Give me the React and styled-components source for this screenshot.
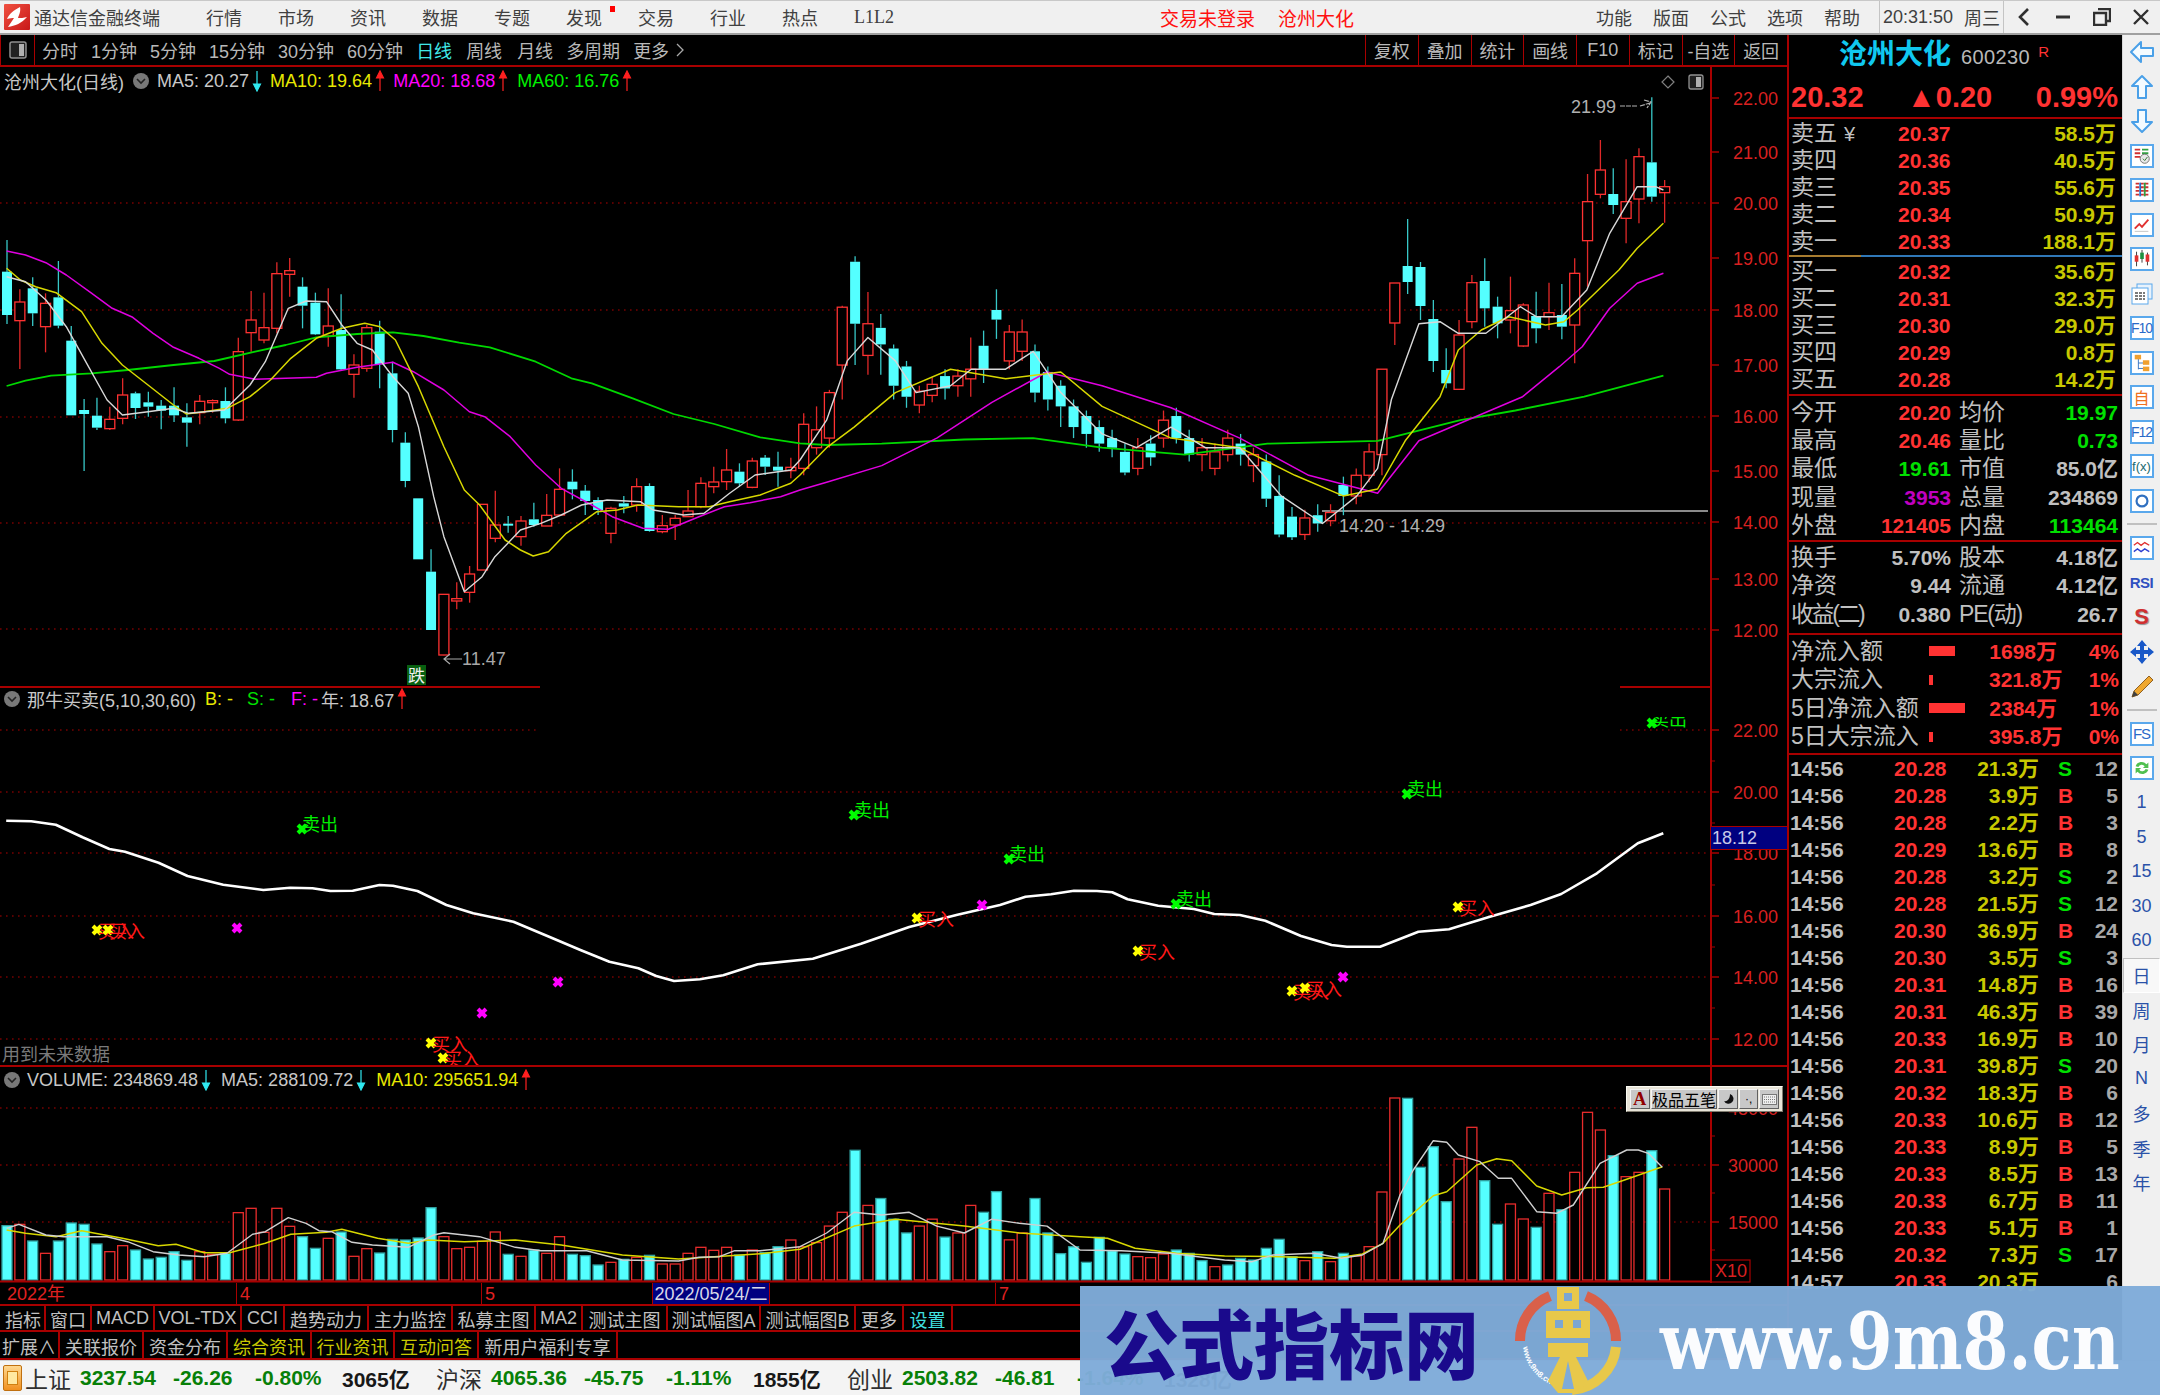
import React from 'react';
import styled, { createGlobalStyle } from 'styled-components';

const Global = createGlobalStyle`
  html, body { margin: 0; background: #000; overflow: hidden; }
  #root { width: 2160px; height: 1395px; }
`;

const SANS = `"Liberation Sans", "Noto Sans CJK SC", sans-serif`;
const DARK_RED = '#a80000';

// ---- coordinate helpers, the traces were read off crops at different scales
const fromLeft = ([x, y]) => [x / 1.96, 230 + y / 3];
const fromImg = ([x, y]) => [x * 1.3776, y * 1.3776];
const fromRight = ([x, y]) => [1440 + x / 2.18, y / 3];
const toPoints = (list) => list.map((p) => p.map((n) => n.toFixed(1)).join(',')).join(' ');
const candleX = (i) => 7 + 12.85 * i;

const MA20 = [
  ...[[13,63],[50,75],[90,98],[130,135],[180,190],[220,235],[260,262],[300,310],[340,352],[390,385],[430,415],[450,433],[500,448],[560,445],[620,442],[640,430],[700,412],[770,397],[810,425],[870,480],[920,545],[950,560],[1000,620],[1050,705],[1100,775],[1160,825],[1200,860],[1260,895],[1310,898],[1370,860],[1420,830],[1470,818],[1530,800],[1568,780]].map(fromLeft),
  ...[[600,350],[640,338],[680,318],[720,292],[760,270],[800,280],[850,296],[900,318],[950,345],[1000,358],[1030,320]].map(fromImg),
  ...[[180,1190],[260,1100],[310,1040],[370,925],[430,850],[487,820]].map(fromRight),
];
const MA60 = [
  ...[[13,468],[50,452],[100,437],[180,430],[250,420],[340,405],[420,393],[500,365],[560,345],[620,322],[700,312],[770,307],[830,318],[900,338],[960,352],[1050,395],[1120,445],[1160,460],[1240,505],[1320,552],[1400,582],[1490,622],[1568,640]].map(fromLeft),
  ...[[600,323],[640,322],[700,319],[750,318],[800,325],[860,330],[920,322],[1000,320],[1060,305],[1100,298],[1150,288]].map(fromImg),
  ...[[487,1127]].map(fromRight),
];
const MA10 = [
  ...[[13,115],[40,150],[70,170],[110,188],[160,245],[200,340],[240,405],[290,465],[340,525],[365,552],[400,545],[445,535],[490,500],[530,450],[570,385],[620,325],[670,295],[715,280],[745,290],[775,330],[820,470],[870,650],[910,780],[940,825],[990,930],[1020,960],[1045,978],[1075,965],[1110,910],[1170,845],[1210,840],[1250,825],[1330,830],[1390,830],[1430,815],[1490,795],[1550,760],[1568,735]].map(fromLeft),
  ...[[600,325],[620,310],[650,285],[690,268],[730,275],[770,270],[800,295],[850,318],[900,325],[940,345],[975,360],[1000,355],[1020,320]].map(fromImg),
  ...[[0,1190],[40,1050],[90,990],[150,950],[230,975],[270,965],[300,930],[390,810],[430,745],[487,670]].map(fromRight),
];
const MA5 = [
  ...[[13,140],[50,155],[90,210],[130,290],[170,400],[210,510],[240,555],[290,545],[340,535],[370,550],[440,540],[490,465],[520,395],[565,235],[600,213],[640,215],[670,285],[700,340],[730,360],[770,440],[800,490],[820,590],[850,800],[870,920],[910,1085],[945,1040],[970,980],[1020,900],[1060,880],[1100,855],[1140,825],[1190,810],[1255,815],[1280,840],[1340,855],[1380,850],[1430,790],[1480,735],[1550,720],[1568,690]].map(fromLeft),
  ...[[600,305],[615,262],[630,245],[650,262],[665,285],[690,280],[705,268],[730,268],[750,255],[770,285],[800,315],[825,325],[850,310],[875,325],[900,325],[930,360],[960,380],[985,360],[1000,340],[1010,290],[1030,235]].map(fromImg),
  ...[[0,965],[40,1000],[100,1000],[175,920],[210,950],[265,950],[320,870],[370,700],[430,560],[470,560],[487,570]].map(fromRight),
];

// hi, body top, body bottom, lo, colour
const CANDLES_A = [
  [30,125,255,282,'c'],[178,216,272,417,'r'],[142,175,250,288,'c'],[190,220,290,367,'r'],[93,202,287,295,'c'],[288,332,556,556,'c'],[507,540,552,723,'c'],[503,557,593,600,'c'],[530,568,596,600,'r'],[445,495,565,583,'r'],
  [485,490,534,567,'c'],[485,517,530,560,'c'],[510,527,542,598,'c'],[472,527,556,576,'c'],[520,562,578,650,'c'],[495,514,548,583,'r'],[508,512,515,548,'r'],[472,513,565,580,'c'],[323,365,570,573,'r'],[183,270,308,365,'r'],
  [188,293,330,340,'r'],[97,131,295,310,'r'],[84,122,133,200,'r'],[142,170,227,295,'c'],[188,218,313,315,'c'],[175,288,318,350,'r'],[193,300,418,420,'c'],[373,405,433,503,'r'],[285,293,415,425,'r'],[272,305,403,475,'c'],
  [395,430,600,637,'c'],[607,638,753,772,'c'],[805,805,988,988,'c'],[958,1025,1200,1200,'c'],[1093,1093,1275,1276,'r'],[1057,1106,1113,1138,'r'],[1008,1032,1087,1118,'r'],[823,823,1020,1020,'r'],[782,885,925,937,'r'],[858,881,885,908,'c'],
  [858,873,920,947,'r'],[818,868,885,890,'c'],[792,856,888,888,'r'],[715,778,855,858,'r'],[718,755,778,808,'c'],[765,782,813,855,'c'],[802,810,840,855,'c'],[830,835,910,940,'r'],[798,820,830,850,'c'],[745,770,825,845,'r'],
  [760,768,903,905,'c'],[855,887,905,910,'r'],[855,865,885,930,'r'],[780,843,860,860,'r'],[742,760,830,835,'r'],[710,756,770,790,'r'],[657,720,755,780,'r'],[700,725,760,770,'c'],[683,693,772,775,'r'],[675,683,710,735,'c'],
  [665,710,722,770,'c'],[683,712,722,745,'r'],
].map(([h, t, b, l, k]) => [230 + h / 3, 230 + t / 3, 230 + b / 3, 230 + l / 3, k]);

const CANDLES_B = [
  [300,308,340,345,'r'],[295,312,325,330,'r'],[283,285,318,325,'r'],[222,223,265,290,'r'],[186,190,235,265,'c'],[212,235,258,272,'r'],[228,238,250,272,'c'],[250,253,280,290,'c'],[262,266,288,296,'c'],[280,284,294,300,'r'],
  [274,279,287,292,'r'],[268,273,282,290,'c'],[268,273,280,288,'r'],[245,268,275,288,'r'],[240,251,268,278,'c'],[210,225,232,246,'c'],[236,241,262,268,'r'],[232,241,255,262,'r'],[250,255,285,292,'c'],[266,270,290,298,'c'],
  [276,280,295,310,'c'],[290,295,310,318,'c'],[298,302,315,325,'c'],[305,310,322,328,'c'],[312,318,325,332,'c'],[322,328,343,345,'c'],[318,325,340,345,'r'],[316,322,332,338,'c'],[298,305,318,325,'r'],[296,302,318,322,'c'],
  [312,318,330,335,'c'],[318,325,330,342,'r'],[322,328,340,345,'r'],[312,318,330,335,'r'],[315,322,330,338,'c'],[325,330,338,350,'r'],[330,335,362,368,'c'],[345,360,388,390,'c'],[368,375,390,392,'c'],[370,376,388,392,'r'],
  [366,374,380,386,'c'],[366,372,378,382,'r'],[346,352,360,374,'c'],[340,345,360,366,'r'],[322,328,345,350,'r'],
].map((c) => [c[0] * 1.3776, c[1] * 1.3776, c[2] * 1.3776, c[3] * 1.3776, c[4]]);

const CANDLES_107 = [[268 * 1.3776, 268 * 1.3776, 330 * 1.3776, 345 * 1.3776, 'r'], [207 * 1.3776, 283, 323, 345, 'r'], [219, 266, 282, 294, 'c'], [262, 267, 306, 320, 'c'], [300, 319, 361, 372, 'c']];

const CANDLES_C = [
  [1045,1110,1150,1165,'c'],[960,1005,1168,1170,'r'],[825,848,965,985,'r'],[775,843,925,980,'c'],[890,920,970,1015,'c'],[830,932,960,1000,'r'],[910,915,1038,1040,'r'],[875,948,985,1030,'c'],[848,938,950,990,'r'],[852,945,980,1018,'c'],
  [775,820,975,1090,'r'],[522,605,722,860,'r'],[420,510,583,595,'r'],[505,582,615,642,'c'],[478,605,655,730,'r'],[445,470,597,670,'r'],[292,487,590,605,'c'],[540,560,578,668,'r'],
].map(([h, t, b, l, k]) => [h / 3, t / 3, b / 3, l / 3, k]);

const CANDLES = [...CANDLES_A, ...CANDLES_B, ...CANDLES_107, ...CANDLES_C];

const VOL_LEFT = [
  [497,'c'],[493,'r'],[543,'c'],[580,'r'],[543,'c'],[489,'c'],[493,'c'],[552,'c'],[575,'r'],[557,'r'],[570,'c'],[597,'c'],[592,'c'],[575,'c'],[601,'c'],[575,'r'],[583,'r'],[580,'c'],[458,'r'],[445,'r'],
  [517,'r'],[445,'r'],[499,'r'],[530,'c'],[565,'c'],[535,'r'],[516,'c'],[589,'r'],[566,'r'],[579,'c'],[538,'c'],[540,'c'],[534,'c'],[443,'c'],[530,'r'],[566,'r'],[562,'r'],[544,'r'],[516,'r'],[583,'c'],
  [589,'r'],[570,'c'],[580,'r'],[530,'r'],[583,'c'],[587,'c'],[615,'c'],[607,'r'],[598,'c'],[592,'r'],[586,'c'],[612,'r'],[612,'r'],[580,'r'],[562,'r'],[571,'r'],[562,'r'],[585,'c'],[570,'r'],[578,'c'],
  [560,'c'],[540,'r'],
].map(([t, k]) => [1060 + t / 3, k]);
const VOL_MID_A = [[905,'r'],[902,'r'],[890,'r'],[880,'r'],[835,'c'],[875,'r'],[870,'c'],[885,'c'],[895,'c'],[890,'r'],[885,'r'],[898,'c'],[895,'r'],[875,'r'],[880,'c'],[865,'c'],[900,'r'],[895,'r'],[870,'c'],[895,'c'],[910,'c'],[905,'c']].map(([t, k]) => [t * 1.3776, k]);
const VOL_MID_B = [[97,'c'],[22,'c'],[62,'c'],[72,'c'],[80,'r'],[83,'r'],[72,'r'],[60,'c'],[70,'c'],[92,'c'],[110,'r'],[105,'c'],[85,'c'],[90,'c'],[55,'c'],[28,'c'],[80,'c'],[92,'r'],[65,'c'],[95,'r'],[70,'c'],[78,'r'],[50,'r']].map(([t, k]) => [1230 + t / 3, k]);
const VOL_RIGHT = [[1192,'r'],[1098,'r'],...[[115,'c'],[322,'c'],[260,'c'],[425,'c'],[297,'r'],[202,'r'],[362,'c'],[493,'c'],[432,'r'],[477,'r'],[502,'c'],[400,'r'],[449,'c'],[337,'r'],[157,'r'],[210,'r'],[287,'c'],[350,'r'],[337,'r'],[272,'c'],[387,'r']].map(([t, k]) => [1060 + t / 3, k])];
const VOLUMES = [...VOL_LEFT, ...VOL_MID_A, ...VOL_MID_B, ...VOL_RIGHT];

const volLeft = ([x, y]) => [x / 1.96, 1060 + y / 3];
const volRightA = ([x, y]) => [1080 + x / 1.452, 1230 + y / 3];
const volRightB = ([x, y]) => [1400 + x / 3, 1060 + y / 3];
const VOL_WHITE = [
  ...[[13,505],[37,493],[90,525],[125,530],[210,530],[250,545],[300,575],[350,585],[400,590],[445,580],[495,523],[520,515],[565,473],[600,490],[625,512],[650,515],[690,547],[730,555],[800,562],[850,525],[870,518],[940,530],[1010,562],[1060,572],[1150,572],[1220,600],[1330,603],[1370,592],[1410,590],[1440,572],[1490,572],[1568,560]].map(volLeft),
  ...[[600,895],[620,880],[640,882],[660,880],[680,890],[700,895],[720,885],[740,888],[760,890]].map(fromImg),
  ...[[0,60],[60,62],[130,70],[210,90],[250,95],[280,75],[340,70],[380,85],[410,75],[440,40]].map(volRightA),
  ...[[0,405],[40,330],[100,242],[140,247],[175,285],[240,305],[295,355],[335,355],[410,455],[470,460],[520,435],[600,310],[680,270],[715,270],[745,280],[787,322]].map(volRightB),
];
const VOL_YELLOW = [
  ...[[13,510],[50,520],[110,530],[160,512],[240,535],[310,557],[345,553],[400,578],[450,578],[520,550],[570,523],[640,517],[670,508],[740,535],[800,550],[840,540],[910,545],[1010,540],[1100,555],[1220,585],[1330,597],[1400,590],[1500,580],[1568,568]].map(volLeft),
  ...[[620,890],[650,885],[700,890],[740,895]].map(fromImg),
  ...[[0,20],[40,25],[80,55],[140,70],[210,78],[290,80],[370,85],[410,72],[440,40]].map(volRightA),
  ...[[0,495],[40,460],[100,407],[140,395],[230,315],[290,296],[335,302],[410,378],[485,405],[560,383],[610,382],[680,358],[787,320]].map(volRightB),
];

const YEAR_LINE = [
  ...[[14,422],[70,424],[125,434],[185,472],[245,507],[280,515],[355,548],[420,588],[500,614],[590,630],[650,623],[700,625],[740,633],[790,632],[850,615],[880,617],[935,633],[1000,675],[1060,700],[1150,725],[1230,770],[1300,810],[1365,845],[1430,865],[1470,888],[1510,903],[1568,898]].map(([x, y]) => [x / 2.24, 680 + y / 3]),
  ...[[525,708],[550,700],[590,696],[625,685],[660,673],[695,664]].map(fromImg),
  ...[[0,675],[50,650],[100,643],[145,632],[190,633],[220,637],[250,658],[310,677],[380,687],[420,702],[470,705],[520,722],[590,768],[650,795],[680,800],[745,800],[820,755],[880,748],[960,710],[1040,675],[1100,642],[1170,580],[1250,490],[1300,460]].map(([x, y]) => [1000 + x / 1.96, 680 + y / 3]),
];

const SELL_MARKS = [[302,829],[854,815],[1009,859],[1176,904],[1407,794]];
const BUY_MARKS = [[97,930],[108,930],[431,1043],[443,1058],[917,918],[1138,951],[1292,991],[1305,988],[1458,907]];
const PINK_MARKS = [[237,928],[482,1013],[558,982],[982,905],[1343,977]];

const PRICE_LABELS = [[22,98],[21,152],[20,203],[19,258],[18,310],[17,365],[16,416],[15,471],[14,522],[13,579],[12,630]];
const IND_LABELS = [[22,730],[20,792],[18,853],[16,916],[14,977],[12,1039]];

const TOP_MENU = ['行情', '市场', '资讯', '数据', '专题', '发现', '交易', '行业', '热点'];
const RIGHT_MENU = ['功能', '版面', '公式', '选项', '帮助'];
const PERIODS = [['分时'], ['1分钟'], ['5分钟'], ['15分钟'], ['30分钟'], ['60分钟'], ['日线'], ['周线', 1], ['月线', 2], ['多周期'], ['更多']];
const TOOLS = ['复权', '叠加', '统计', '画线', 'F10', '标记', '-自选', '返回'];
const SELL_BOOK = [['卖五', '20.37', '58.5万'], ['卖四', '20.36', '40.5万'], ['卖三', '20.35', '55.6万'], ['卖二', '20.34', '50.9万'], ['卖一', '20.33', '188.1万']];
const BUY_BOOK = [['买一', '20.32', '35.6万'], ['买二', '20.31', '32.3万'], ['买三', '20.30', '29.0万'], ['买四', '20.29', '0.8万'], ['买五', '20.28', '14.2万']];
const STATS_A = [
  ['今开', '20.20', '#ff3232', '均价', '19.97', '#00e000'],
  ['最高', '20.46', '#ff3232', '量比', '0.73', '#00e000'],
  ['最低', '19.61', '#00e000', '市值', '85.0亿', '#c0c0c0'],
  ['现量', '3953', '#c000c0', '总量', '234869', '#c0c0c0'],
  ['外盘', '121405', '#ff3232', '内盘', '113464', '#00e000'],
];
const STATS_B = [
  ['换手', '5.70%', '#c0c0c0', '股本', '4.18亿', '#c0c0c0'],
  ['净资', '9.44', '#c0c0c0', '流通', '4.12亿', '#c0c0c0'],
  ['收益(二)', '0.380', '#c0c0c0', 'PE(动)', '26.7', '#c0c0c0'],
];
const FLOWS = [['净流入额', 26, '1698万', '4%'], ['大宗流入', 4, '321.8万', '1%'], ['5日净流入额', 36, '2384万', '1%'], ['5日大宗流入', 4, '395.8万', '0%']];
const TICKS = [
  ['14:56','20.28','21.3万','S','12'],['14:56','20.28','3.9万','B','5'],['14:56','20.28','2.2万','B','3'],['14:56','20.29','13.6万','B','8'],['14:56','20.28','3.2万','S','2'],
  ['14:56','20.28','21.5万','S','12'],['14:56','20.30','36.9万','B','24'],['14:56','20.30','3.5万','S','3'],['14:56','20.31','14.8万','B','16'],['14:56','20.31','46.3万','B','39'],
  ['14:56','20.33','16.9万','B','10'],['14:56','20.31','39.8万','S','20'],['14:56','20.32','18.3万','B','6'],['14:56','20.33','10.6万','B','12'],['14:56','20.33','8.9万','B','5'],
  ['14:56','20.33','8.5万','B','13'],['14:56','20.33','6.7万','B','11'],['14:56','20.33','5.1万','B','1'],['14:56','20.32','7.3万','S','17'],['14:57','20.33','20.3万','','6'],
];
const BTN_ROW_A = [['指标',44],['窗口',46],['MACD',63],['VOL-TDX',87],['CCI',43],['趋势动力',84],['主力监控',84],['私募主图',83],['MA2',47],['测试主图',85],['测试幅图A',93],['测试幅图B',95],['更多',48],['设置',49,'#40e0e0']];
const BTN_ROW_B = [['扩展∧',60],['关联报价',84],['资金分布',84],['综合资讯',84,'#c8c800'],['行业资讯',83,'#c8c800'],['互动问答',84,'#c8c800'],['新用户福利专享',139]];
const QUOTES = [
  ['上证','3237.54','-26.26','-0.80%','3065亿'],
  ['沪深','4065.36','-45.75','-1.11%','1855亿'],
  ['创业','2503.82','-46.81','-1.64%','1328亿'],
];

// ---- layout
const Page = styled.div`
  width: 2160px;
  height: 1395px;
  position: relative;
  overflow: hidden;
  display: flex;
  flex-direction: column;
  font-family: ${SANS};
`;

const TitleBar = styled.div`
  height: 35px;
  box-sizing: border-box;
  flex: none;
  display: flex;
  align-items: center;
  background: #f0f0f0;
  border-top: 1px solid #c8c8c8;
  border-bottom: 2px solid #a0a0a0;
  color: #404040;
  font-size: 18px;
`;

const AppName = styled.div`
  margin-left: 4px;
  width: 172px;
`;

const MenuItem = styled.div`
  position: relative;
  width: ${(p) => p.$w || 72}px;
  font-family: ${(p) => (p.$serif ? '"Liberation Serif", serif' : 'inherit')};
`;

const RedDot = styled.span`
  position: absolute;
  left: 44px;
  top: 2px;
  width: 5px;
  height: 6px;
  background: #ff0000;
`;

const AlertText = styled.div`
  color: #ff1010;
  font-size: 19px;
  margin-left: ${(p) => p.$ml}px;
`;

const RightMenu = styled.div`
  margin-left: auto;
  display: flex;
  align-items: center;
  height: 100%;
`;

const Clock = styled.div`
  height: 100%;
  width: 125px;
  box-sizing: border-box;
  margin-left: -2px;
  padding-left: 3px;
  display: flex;
  align-items: center;
  justify-content: space-between;
  padding-right: 3px;
  white-space: nowrap;
  border-left: 1px solid #c4c4c4;
  border-right: 1px solid #c4c4c4;
  font-size: 18px;
`;

const WinButton = styled.div`
  width: 39px;
  display: flex;
  justify-content: center;
  align-items: center;
  color: #303030;
`;

const Body = styled.div`
  flex: none;
  height: 1325px;
  display: flex;
  background: #000;
`;

const LeftCol = styled.div`
  width: 1787px;
  flex: none;
  display: flex;
  flex-direction: column;
`;

const Toolbar = styled.div`
  height: 32px;
  box-sizing: border-box;
  flex: none;
  display: flex;
  align-items: center;
  border-bottom: 2px solid ${DARK_RED};
  color: #b8b8b8;
  font-size: 18px;
`;

const PanelToggle = styled.div`
  width: 35px;
  height: 100%;
  box-sizing: border-box;
  display: flex;
  align-items: center;
  justify-content: center;
  border-left: 1px solid ${DARK_RED};
  border-right: 1px solid ${DARK_RED};
`;

const Periods = styled.div`
  display: flex;
  align-items: center;
  gap: 13px;
  padding-left: 7px;
`;

const Period = styled.span`
  margin-left: ${(p) => p.$ml || 0}px;
  color: ${(p) => (p.$active ? '#40e8e8' : 'inherit')};
`;

const Tools = styled.div`
  margin-left: auto;
  height: 100%;
  display: flex;
`;

const Tool = styled.div`
  width: 52.75px;
  box-sizing: border-box;
  display: flex;
  align-items: center;
  justify-content: center;
  border-left: 1px solid ${DARK_RED};
`;

const Panel = styled.div`
  position: relative;
  flex: none;
  height: ${(p) => p.$h}px;
  color: #c8c8c8;
  font-size: 18px;
`;

const Chart = styled.svg`
  display: block;
  width: 1787px;
  height: 100%;
  text {
    font-family: ${SANS};
    font-size: 18px;
  }
`;

const PanelHead = styled.div`
  position: absolute;
  left: 0;
  top: ${(p) => p.$top}px;
  height: 22px;
  display: flex;
  align-items: center;
  padding-left: ${(p) => p.$pl || 4}px;
  white-space: nowrap;
`;

const Chevron = styled.span`
  width: 16px;
  height: 16px;
  flex: none;
  border-radius: 50%;
  background: #787878;
  margin: 0 ${(p) => p.$mr || 8}px 0 ${(p) => p.$ml || 0}px;
  display: flex;
  align-items: center;
  justify-content: center;
`;

const HeadText = styled.span`
  color: ${(p) => p.$c || '#c8c8c8'};
  margin-left: ${(p) => p.$ml || 0}px;
`;

const FutureNote = styled.div`
  position: absolute;
  left: 2px;
  bottom: 1px;
  color: #7a7a7a;
  font-size: 18px;
`;

const PriceTag = styled.div`
  position: absolute;
  left: 1711px;
  top: 138px;
  width: 76px;
  height: 24px;
  box-sizing: border-box;
  padding-left: 1px;
  background: #000080;
  border: 1px solid ${DARK_RED};
  border-width: 1px 0;
  color: #c8c8e8;
  font-size: 18px;
  line-height: 22px;
`;

const ImeBar = styled.div`
  position: absolute;
  left: 1626px;
  top: 19px;
  width: 157px;
  height: 26px;
  box-sizing: border-box;
  padding: 2px 3px;
  display: flex;
  gap: 1px;
  background: #e8e4d8;
  border: 1px solid #f8f8f0;
  border-color: #fcfcf4 #807c70 #807c70 #fcfcf4;
`;

const ImeCell = styled.div`
  width: ${(p) => p.$w}px;
  display: flex;
  align-items: center;
  justify-content: center;
  background: #c8c8c8;
  border: 1px solid #eee;
  border-color: #f4f4f4 #606060 #606060 #f4f4f4;
  color: ${(p) => p.$c || '#000'};
  font-size: ${(p) => p.$fs || 16}px;
  font-weight: ${(p) => p.$fw || 400};
  font-family: ${(p) => (p.$serif ? '"Liberation Serif", serif' : 'inherit')};
`;

const DateAxis = styled.div`
  position: relative;
  flex: none;
  height: 23px;
  box-sizing: border-box;
  border-bottom: 2px solid ${DARK_RED};
  color: #e02020;
  font-size: 18px;
  line-height: 22px;
`;

const DateMark = styled.span`
  position: absolute;
  left: ${(p) => p.$x}px;
  top: 0;
  height: 21px;
  padding-left: ${(p) => (p.$line ? 3 : 0)}px;
  border-left: ${(p) => (p.$line ? `1px solid ${DARK_RED}` : 'none')};
`;

const DateCursor = styled.span`
  position: absolute;
  left: 652px;
  top: 0;
  width: 116px;
  height: 21px;
  text-align: center;
  background: #000080;
  color: #d8d8e8;
  border-left: 1px solid ${DARK_RED};
  border-right: 1px solid ${DARK_RED};
`;

const ButtonRow = styled.div`
  flex: none;
  height: ${(p) => p.$h}px;
  box-sizing: border-box;
  display: flex;
  padding-left: ${(p) => p.$pl || 0}px;
  border-bottom: 2px solid ${DARK_RED};
`;

const RowButton = styled.div`
  width: ${(p) => p.$w}px;
  box-sizing: border-box;
  padding-top: 1px;
  display: flex;
  align-items: center;
  justify-content: center;
  border-right: 2px solid ${DARK_RED};
  color: ${(p) => p.$c || '#c0c0c0'};
  font-size: 18px;
  white-space: nowrap;
`;

// ---- quote panel
const QuotePanel = styled.div`
  width: 335px;
  flex: none;
  box-sizing: border-box;
  border-left: 2px solid ${DARK_RED};
  overflow: hidden;
  font-size: 21px;
  line-height: 1;
  color: #c0c0c0;
`;

const NameRow = styled.div`
  height: 40px;
  display: flex;
  align-items: center;
  padding-left: 50px;
`;

const StockName = styled.span`
  color: #10c8f0;
  font-size: 28px;
  font-weight: 700;
  width: 122px;
`;

const StockCode = styled.span`
  font-size: 20px;
  color: #b8b8b8;
  margin-top: 4px;
  letter-spacing: 0.4px;
`;

const RMark = styled.span`
  font-size: 15px;
  color: #ff3232;
  margin: -8px 0 0 8px;
`;

const PriceRow = styled.div`
  height: 44px;
  box-sizing: border-box;
  padding: 3px 4px 0 2px;
  display: flex;
  align-items: center;
  justify-content: space-between;
  color: #ff3232;
  font-size: 29px;
  font-weight: 700;
  border-bottom: 2px solid ${DARK_RED};
`;

const Section = styled.div`
  box-sizing: border-box;
  height: ${(p) => p.$h}px;
  padding-top: ${(p) => p.$pt || 0}px;
  border-bottom: ${(p) => (p.$line ? `2px solid ${DARK_RED}` : 'none')};
`;

const BookRow = styled.div`
  height: 27px;
  display: grid;
  grid-template-columns: 107px 60px 158px;
  align-items: center;
  padding-left: 2px;
`;

const CnLabel = styled.span`
  font-size: 23px;
  color: #c0c0c0;
  white-space: nowrap;
  letter-spacing: ${(p) => p.$ls || 0}px;
`;

const Yuan = styled.span`
  margin-left: 7px;
  font-size: 20px;
`;

const Num = styled.span`
  color: ${(p) => p.$c || '#c0c0c0'};
  font-weight: ${(p) => p.$fw || 700};
  text-align: ${(p) => p.$align || 'left'};
  white-space: nowrap;
`;

const BookSplit = styled.div`
  height: 2px;
  margin-bottom: 1px;
  background: linear-gradient(90deg, #a87c30 0 72px, #3078b8 72px);
`;

const StatRow = styled.div`
  height: ${(p) => p.$h}px;
  display: grid;
  grid-template-columns: 160px 8px 159px;
  align-items: center;
  padding-left: 2px;
`;

const StatCell = styled.div`
  grid-column: ${(p) => p.$col};
  display: flex;
  justify-content: space-between;
  align-items: center;
`;

const FlowRow = styled.div`
  height: 28.5px;
  display: grid;
  grid-template-columns: 138px 60px 68px 62px;
  align-items: center;
  padding-left: 2px;
`;

const FlowBar = styled.span`
  display: block;
  height: 10px;
  background: #ff3232;
`;

const TickRow = styled.div`
  height: 27px;
  display: grid;
  grid-template-columns: 104px 60px 85px 19px 20px 40px;
  align-items: center;
  padding-left: 1px;
`;

const TickSide = styled.span`
  grid-column: 5;
  font-weight: 700;
  color: ${(p) => (p.$side === 'S' ? '#00e000' : '#ff3232')};
`;

const StatusBar = styled.div`
  flex: none;
  height: 35px;
  display: flex;
  align-items: center;
  padding-left: 3px;
  background: #f4f4f4;
  border-top: 1px solid #d0d0d0;
  box-sizing: border-box;
  font-size: 21px;
`;

const StatusIcon = styled.span`
  width: 19px;
  height: 26px;
  box-sizing: border-box;
  flex: none;
  margin-right: 3px;
  display: flex;
  align-items: center;
  justify-content: center;
  background: linear-gradient(#ffd890, #f09020);
  border: 1px solid #c07010;
  border-radius: 2px;
`;

const StatusDot = styled.span`
  width: 9px;
  height: 12px;
  background: #ffe8a0;
  border: 1px solid #d08010;
`;

const QuoteGroup = styled.div`
  display: grid;
  grid-template-columns: 55px 93px 82px 87px 94px;
  align-items: center;
  flex: none;
`;

const QuoteName = styled.span`
  font-size: 23px;
  color: #303030;
`;

const QuoteNum = styled.span`
  color: ${(p) => p.$c};
  font-weight: 700;
`;

// ---- icon strip
const IconStrip = styled.div`
  width: 38px;
  flex: none;
  box-sizing: border-box;
  background: #f0f0f0;
  border-left: 1px solid #d8d8d8;
  height: 1360px;
  display: flex;
  flex-direction: column;
  align-items: center;
`;

const StripSlot = styled.div`
  width: 100%;
  flex: none;
  height: 34.5px;
  display: flex;
  align-items: center;
  justify-content: center;
  color: #2a52a8;
  font-size: ${(p) => p.$fs || 18}px;
  box-sizing: border-box;
  background: ${(p) => (p.$on ? '#f8f8f8' : 'transparent')};
  border: ${(p) => (p.$on ? '1px solid #fff' : 'none')};
  border-top-color: #c0c0c0;
  border-left-color: #c0c0c0;
`;

const StripRule = styled.div`
  flex: none;
  width: 30px;
  height: 13px;
  &::after {
    content: '';
    display: block;
    height: 2px;
    margin-top: 5px;
    background: #c0c0c0;
  }
`;

const IconBox = styled.div`
  width: 24px;
  height: 24px;
  box-sizing: border-box;
  background: #fff;
  border: 2px solid #5aa8ec;
  color: ${(p) => p.$c || '#2a6ac8'};
  font-size: ${(p) => p.$fs || 14}px;
  display: flex;
  align-items: center;
  justify-content: center;
  white-space: nowrap;
  letter-spacing: ${(p) => p.$ls || 0}px;
`;

const RsiMark = styled.span`
  color: #3050c0;
  font-size: 15px;
  font-weight: 700;
  letter-spacing: -0.5px;
`;

const DollarMark = styled.span`
  color: #d03030;
  font-size: 22px;
  font-weight: 700;
  text-shadow: 1px 1px 1px #909090;
`;

// ---- banner over the bottom right corner
const Banner = styled.div`
  position: absolute;
  left: 1080px;
  top: 1286px;
  width: 1080px;
  height: 109px;
  display: flex;
  align-items: center;
  background: rgba(127, 171, 217, 0.97);
`;

const BannerTitle = styled.div`
  margin-left: 24px;
  width: 410px;
  flex: none;
  color: #1a0a8c;
  font-family: "Noto Sans CJK SC", sans-serif;
  font-weight: 900;
  font-size: 75px;
  white-space: nowrap;
`;

const BannerUrl = styled.div`
  margin-left: 38px;
  color: #fbfcfe;
  font-family: "DejaVu Serif", serif;
  font-weight: 700;
  font-size: 66px;
  white-space: nowrap;
  transform: scaleY(1.2);
  transform-origin: center;
`;

// ---- small drawings
const HeadArrow = ({ up }) => (
  <svg width="10" height="22" viewBox="0 0 10 22" style={{ margin: '0 0 0 3px', flex: 'none' }}>
    {up ? (
      <path d="M5 21V5M1.5 8L5 1l3.5 7z" stroke="#ff2020" fill="#ff2020" strokeWidth="1.2" />
    ) : (
      <path d="M5 1v16M1.5 14L5 21l3.5-7z" stroke="#30e8f0" fill="#30e8f0" strokeWidth="1.2" />
    )}
  </svg>
);

const ChevronGlyph = () => (
  <svg width="10" height="8" viewBox="0 0 10 8">
    <path d="M1 2l4 4 4-4" fill="none" stroke="#222" strokeWidth="1.6" />
  </svg>
);

const ToggleGlyph = () => (
  <svg width="18" height="18" viewBox="0 0 18 18">
    <rect x="1" y="1" width="16" height="16" rx="2" fill="#222" stroke="#909090" strokeWidth="1.5" />
    <rect x="10" y="3" width="5" height="12" fill="#b0b0b0" />
  </svg>
);

const AppLogo = () => (
  <svg width="26" height="26" viewBox="0 0 26 26" style={{ marginLeft: 4, flex: 'none' }}>
    <defs>
      <linearGradient id="lg" x1="0" y1="0" x2="1" y2="1">
        <stop offset="0" stopColor="#f05040" />
        <stop offset="1" stopColor="#c81818" />
      </linearGradient>
    </defs>
    <rect width="26" height="26" rx="1" fill="url(#lg)" />
    <path d="M16 3C10 6 5 10 3 15c3-1 5-1 7-1-2 3-4 6-6 9 7-1 14-4 19-10-3 1-7 1-9 1 1-3 3-7 2-11z" fill="#fff" />
  </svg>
);

const BannerLogo = () => (
  <svg width="108" height="108" viewBox="0 0 108 108" style={{ flex: 'none' }}>
    <defs>
      <path id="rimText" d="M9 60A46 46 0 0 0 46 100" />
    </defs>
    <path d="M6 54A48 48 0 0 1 36 9" fill="none" stroke="#d9604a" strokeWidth="10" />
    <path d="M72 9A48 48 0 0 1 102 54" fill="none" stroke="#d9604a" strokeWidth="10" />
    <path d="M102 60A48 48 0 0 1 58 103" fill="none" stroke="#e8c84a" strokeWidth="10" />
    <text fontSize="8" fill="#fff" fontFamily="Liberation Sans, sans-serif" fontWeight="700"><textPath href="#rimText">www.9m8.cn</textPath></text>
    <path fillRule="evenodd" d="M43 0h22v22H43zM50 6h8v8h-8zM32 24h44v27H32zM41 33v8h8v-8zM59 33v8h8v-8z" fill="#e8c84a" />
    <path d="M34 56h40v14H62l12 24-10 12H44L34 94l12-24H34z" fill="#e8c84a" />
    <path d="M54 74l-6 28h12z" fill="#7fabd9" />
  </svg>
);

const Candles = () => (
  <g>
    {CANDLES.map(([hi, top, bot, lo, kind], i) => {
      const x = candleX(i);
      const color = kind === 'c' ? '#54ffff' : '#ff3232';
      return (
        <g key={i}>
          <line x1={x} x2={x} y1={hi} y2={top} stroke={kind === 'c' ? '#38c8c8' : '#e02828'} strokeWidth="1.3" />
          <line x1={x} x2={x} y1={bot} y2={lo} stroke={kind === 'c' ? '#38c8c8' : '#e02828'} strokeWidth="1.3" />
          <rect
            x={x - 5}
            y={top}
            width="10"
            height={Math.max(bot - top, 2)}
            fill={kind === 'c' ? color : '#000'}
            stroke={color}
            strokeWidth={kind === 'c' ? 0 : 1.3}
          />
        </g>
      );
    })}
  </g>
);

const Line = ({ pts, color, w = 1.4 }) => (
  <polyline points={toPoints(pts)} fill="none" stroke={color} strokeWidth={w} strokeLinejoin="round" />
);

const Dots = ({ y, x1 = 0, x2 = 1711 }) => (
  <line x1={x1} x2={x2} y1={y} y2={y} stroke="#b00000" strokeWidth="1.2" strokeDasharray="1.6 4.4" />
);

const AxisLabels = ({ items, x = 1733 }) => (
  <g>
    {items.map(([v, y]) => (
      <g key={y}>
        <line x1="1711" x2="1719" y1={y} y2={y} stroke={DARK_RED} strokeWidth="1.5" />
        <text x={x} y={y + 7} fill="#d82020">{typeof v === 'number' ? v.toFixed(2) : v}</text>
      </g>
    ))}
  </g>
);

const MainChart = () => (
  <Chart viewBox="0 67 1787 621">
    {[203, 310, 417, 523, 629].map((y) => <Dots key={y} y={y} />)}
    <line x1="1711" x2="1711" y1="67" y2="688" stroke={DARK_RED} strokeWidth="2" />
    <AxisLabels items={PRICE_LABELS} />
    <line x1="1322" x2="1708" y1="511" y2="511" stroke="#b8b8b8" strokeWidth="1.6" />
    <Candles />
    <Line pts={MA60} color="#00d800" w={1.8} />
    <Line pts={MA20} color="#e000e0" w={1.5} />
    <Line pts={MA10} color="#d8d800" w={1.5} />
    <Line pts={MA5} color="#d8d8d8" w={1.4} />
    <text x="1339" y="532" fill="#b0b0b0">14.20 - 14.29</text>
    <text x="1571" y="113" fill="#b0b0b0">21.99</text>
    <path d="M1620 106h18M1640 106l10-3M1644 100l7 2-4 6" fill="none" stroke="#b0b0b0" strokeWidth="1.2" strokeDasharray="5 1" />
    <text x="462" y="665" fill="#a8a8a8">11.47</text>
    <path d="M462 659h-18M450 654l-6 5 6 5" fill="none" stroke="#a8a8a8" strokeWidth="1.2" />
    <rect x="407" y="665" width="19" height="20" fill="#086010" />
    <text x="408" y="682" fill="#f0f0f0" style={{ fontSize: 17 }}>跌</text>
    <path d="M1668 76l6 6-6 6-6-6z" fill="none" stroke="#808080" strokeWidth="1.2" />
    <rect x="1689" y="75" width="14" height="14" rx="2" fill="#202020" stroke="#909090" strokeWidth="1.3" />
    <rect x="1696" y="77" width="5" height="10" fill="#b0b0b0" />
    <line x1="0" x2="540" y1="687" y2="687" stroke={DARK_RED} strokeWidth="2" />
    <line x1="1620" x2="1711" y1="687" y2="687" stroke={DARK_RED} strokeWidth="2" />
  </Chart>
);

const MarkCross = ({ x, y, color }) => (
  <path d={`M${x - 4} ${y - 4}L${x + 4} ${y + 4}M${x + 4} ${y - 4}L${x - 4} ${y + 4}`} stroke={color} strokeWidth="4" />
);

const IndicatorChart = () => (
  <Chart viewBox="0 688 1787 379">
    <Dots y={730} x2={540} />
    <Dots y={730} x1={1620} />
    {[792, 853, 916, 977, 1039].map((y) => <Dots key={y} y={y} />)}
    <line x1="1711" x2="1711" y1="688" y2="1067" stroke={DARK_RED} strokeWidth="2" />
    {[761, 823, 885, 947, 1008].map((y) => <line key={y} x1="1711" x2="1715" y1={y} y2={y} stroke={DARK_RED} />)}
    <AxisLabels items={IND_LABELS} />
    <Line pts={YEAR_LINE} color="#ffffff" w={2.6} />
    {PINK_MARKS.map(([x, y]) => <MarkCross key={x} x={x} y={y} color="#ff00ff" />)}
    {BUY_MARKS.map(([x, y]) => (
      <g key={x}>
        <MarkCross x={x} y={y} color="#ffff00" />
        <text x={x + 1} y={y + 8} fill="#ff1818">买入</text>
      </g>
    ))}
    {SELL_MARKS.map(([x, y]) => (
      <g key={x}>
        <MarkCross x={x} y={y} color="#00ff00" />
        <text x={x} y={y + 2} fill="#00f000">卖出</text>
      </g>
    ))}
    <clipPath id="lastSell"><rect x="1640" y="717" width="60" height="20" /></clipPath>
    <MarkCross x={1652} y={723} color="#00ff00" />
    <text x="1651" y="726" fill="#00f000" clipPath="url(#lastSell)">卖出</text>
    <line x1="0" x2="1787" y1="1066" y2="1066" stroke={DARK_RED} strokeWidth="2" />
  </Chart>
);

const VolumeChart = () => (
  <Chart viewBox="0 1067 1787 216">
    {[1108, 1165, 1222].map((y) => <Dots key={y} y={y} />)}
    <line x1="1711" x2="1711" y1="1067" y2="1283" stroke={DARK_RED} strokeWidth="2" />
    {[1136, 1193, 1250].map((y) => <line key={y} x1="1711" x2="1715" y1={y} y2={y} stroke={DARK_RED} />)}
    <AxisLabels items={[['45000', 1108], ['30000', 1165], ['15000', 1222]]} x={1728} />
    {VOLUMES.map(([top, kind], i) => (
      <rect
        key={i}
        x={candleX(i) - 5}
        y={top}
        width="10"
        height={1280 - top}
        fill={kind === 'c' ? '#54ffff' : '#000'}
        stroke={kind === 'c' ? '#30a0a0' : '#e82c2c'}
        strokeWidth="1.3"
      />
    ))}
    <Line pts={VOL_YELLOW} color="#d8d800" w={1.5} />
    <Line pts={VOL_WHITE} color="#d0d0d0" w={1.4} />
    <rect x="1711" y="1260" width="39" height="22" fill="none" stroke={DARK_RED} strokeWidth="1.2" />
    <text x="1715" y="1277" fill="#d82020">X10</text>
    <line x1="0" x2="1711" y1="1281.5" y2="1281.5" stroke={DARK_RED} strokeWidth="2" />
  </Chart>
);

const Arrow = ({ d }) => (
  <svg width="26" height="26" viewBox="0 0 26 26">
    <path d={d} fill="#f4fbff" stroke="#4aa0e8" strokeWidth="2" strokeLinejoin="round" />
  </svg>
);

const Glyph = ({ children }) => (
  <svg width="22" height="22" viewBox="0 0 22 22">{children}</svg>
);

const STRIP = [
  { node: <Arrow d="M2 13L12 3v6h12v8H12v6z" /> },
  { node: <Arrow d="M13 2l10 10h-6v12H9V12H3z" /> },
  { node: <Arrow d="M13 24L3 14h6V2h8v12h6z" /> },
  { node: <IconBox><Glyph><path d="M3 4h6M3 8h6M3 12h6" stroke="#d03030" strokeWidth="2" /><path d="M11 4h7M11 8h7" stroke="#30a040" strokeWidth="2" /><circle cx="14" cy="14" r="5" fill="#e8e8e8" stroke="#707070" /><path d="M12 14l2 2 3-4" fill="none" stroke="#307030" /></Glyph></IconBox> },
  { node: <IconBox><Glyph><path d="M4 4h14M4 8h14M4 12h14M4 16h14" stroke="#d03030" strokeWidth="2" strokeDasharray="4 1" /><path d="M9 3v15" stroke="#2070d0" strokeWidth="2" /><path d="M14 3v15" stroke="#30a040" strokeWidth="2" /></Glyph></IconBox> },
  { node: <IconBox><Glyph><path d="M3 15l5-5 3 3 7-8" fill="none" stroke="#e03030" strokeWidth="2" /><path d="M3 18h15" stroke="#c0c0c0" /></Glyph></IconBox> },
  { node: <IconBox><Glyph><path d="M5 3v16M11 1v14M17 4v14" stroke="#303030" /><rect x="3" y="7" width="4" height="7" fill="#e03030" /><rect x="9" y="4" width="4" height="7" fill="#209040" /><rect x="15" y="6" width="4" height="8" fill="#e03030" /></Glyph></IconBox> },
  { node: <Glyph><rect x="6" y="1" width="15" height="15" fill="#e8f2fc" stroke="#5aa8ec" /><rect x="1" y="5" width="16" height="16" fill="#fff" stroke="#5aa8ec" /><path d="M4 10h10M4 13h10M4 16h10" stroke="#505050" strokeWidth="1.4" strokeDasharray="3 1" /></Glyph> },
  { node: <IconBox $fs={14} $ls={-1}>F10</IconBox> },
  { node: <IconBox><Glyph><path d="M7 5v13M7 11h6M7 17h6" stroke="#3070c0" /><rect x="3" y="2" width="7" height="5" fill="#f0a030" /><rect x="12" y="8" width="7" height="5" fill="#f0a030" /><rect x="12" y="15" width="7" height="5" fill="#f0a030" /></Glyph></IconBox> },
  { node: <IconBox $c="#f07020" $fs={16}>自</IconBox> },
  { node: <IconBox $fs={14} $ls={-1}>F12</IconBox> },
  { node: <IconBox $c="#206a70" $fs={13}>f(x)</IconBox> },
  { node: <IconBox><Glyph><circle cx="11" cy="11" r="6" fill="none" stroke="#3070c0" strokeWidth="2.4" /></Glyph></IconBox> },
  { rule: true },
  { node: <IconBox><Glyph><path d="M2 8l4-3 4 3 4-3 5 3" fill="none" stroke="#e03030" strokeWidth="1.5" /><path d="M2 15l4-3 4 3 4-3 5 3" fill="none" stroke="#3040d0" strokeWidth="1.5" /></Glyph></IconBox> },
  { node: <RsiMark>RSI</RsiMark> },
  { node: <DollarMark>S</DollarMark> },
  { node: <svg width="26" height="26" viewBox="0 0 26 26"><path d="M13 1l5 6h-3v4h4V8l6 5-6 5v-3h-4v4h3l-5 6-5-6h3v-4H7v3l-6-5 6-5v3h4V7H8z" fill="#1858c8" /></svg> },
  { node: <svg width="26" height="26" viewBox="0 0 26 26"><path d="M20 3l4 4L9 22l-6 2 2-6z" fill="#f0a830" stroke="#906020" /><path d="M3 24l2-6 4 4z" fill="#404040" /></svg> },
  { rule: true },
  { node: <IconBox $fs={15} $ls={-1}>FS</IconBox> },
  { node: <IconBox><Glyph><path d="M4 9a7 7 0 0 1 12-2l2-2v6h-6l2-2a4 4 0 0 0-7 1z" fill="#50c050" /><path d="M18 13a7 7 0 0 1-12 2l-2 2v-6h6l-2 2a4 4 0 0 0 7-1z" fill="#50c050" /></Glyph></IconBox> },
  ...['1', '5', '15', '30', '60'].map((t) => ({ text: t })),
  { text: '日', on: true },
  ...['周', '月', 'N', '多', '季', '年'].map((t) => ({ text: t })),
];

const QuoteSide = () => (
  <QuotePanel>
    <NameRow>
      <StockName>沧州大化</StockName>
      <StockCode>600230</StockCode>
      <RMark>R</RMark>
    </NameRow>
    <PriceRow>
      <span>20.32</span>
      <span>▲0.20</span>
      <span>0.99%</span>
    </PriceRow>
    <Section $h={136} $pt={1}>
      {SELL_BOOK.map(([label, price, vol], i) => (
        <BookRow key={label}>
          <CnLabel>{label}{i === 0 && <Yuan>¥</Yuan>}</CnLabel>
          <Num $c="#ff3232">{price}</Num>
          <Num $c="#c8c800" $align="right">{vol}</Num>
        </BookRow>
      ))}
    </Section>
    <BookSplit />
    <Section $h={138} $line>
      {BUY_BOOK.map(([label, price, vol]) => (
        <BookRow key={label}>
          <CnLabel>{label}</CnLabel>
          <Num $c="#ff3232">{price}</Num>
          <Num $c="#c8c800" $align="right">{vol}</Num>
        </BookRow>
      ))}
    </Section>
    <Section $h={146} $pt={2} $line>
      {STATS_A.map(([a, av, ac, b, bv, bc]) => (
        <StatRow key={a} $h={28.4}>
          <StatCell $col={1}><CnLabel>{a}</CnLabel><Num $c={ac}>{av}</Num></StatCell>
          <StatCell $col={3}><CnLabel>{b}</CnLabel><Num $c={bc}>{bv}</Num></StatCell>
        </StatRow>
      ))}
    </Section>
    <Section $h={93} $pt={1} $line>
      {STATS_B.map(([a, av, ac, b, bv, bc]) => (
        <StatRow key={a} $h={28.6}>
          <StatCell $col={1}><CnLabel $ls={a.includes('(') ? -2.4 : 0}>{a}</CnLabel><Num $c={ac}>{av}</Num></StatCell>
          <StatCell $col={3}><CnLabel $ls={b.includes('(') ? -1.2 : 0}>{b}</CnLabel><Num $c={bc}>{bv}</Num></StatCell>
        </StatRow>
      ))}
    </Section>
    <Section $h={120} $pt={2} $line>
      {FLOWS.map(([label, w, vol, pct]) => (
        <FlowRow key={label}>
          <CnLabel>{label}</CnLabel>
          <FlowBar style={{ width: w }} />
          <Num $c="#ff3232" $align="right">{vol}</Num>
          <Num $c="#ff3232" $align="right">{pct}</Num>
        </FlowRow>
      ))}
    </Section>
    {TICKS.map(([time, price, vol, side, count], i) => (
      <TickRow key={i}>
        <Num>{time}</Num>
        <Num $c="#ff3232">{price}</Num>
        <Num $c="#c8c800" $align="right">{vol}</Num>
        {side && <TickSide $side={side}>{side}</TickSide>}
        <Num $c="#a8a8a8" $align="right" style={{ gridColumn: 6 }}>{count}</Num>
      </TickRow>
    ))}
  </QuotePanel>
);

export default function App() {
  return (
    <Page>
      <Global />
      <TitleBar>
        <AppLogo />
        <AppName>通达信金融终端</AppName>
        {TOP_MENU.map((m) => (
          <MenuItem key={m}>
            {m}
            {m === '发现' && <RedDot />}
          </MenuItem>
        ))}
        <MenuItem $serif>L1L2</MenuItem>
        <AlertText $ml={234}>交易未登录</AlertText>
        <AlertText $ml={23}>沧州大化</AlertText>
        <RightMenu>
          {RIGHT_MENU.map((m) => <MenuItem key={m} $w={57}>{m}</MenuItem>)}
          <Clock><span>20:31:50</span><span>周三</span></Clock>
          <WinButton><svg width="14" height="20" viewBox="0 0 14 20"><path d="M11 2L3 10l8 8" fill="none" stroke="#303030" strokeWidth="2.6" /></svg></WinButton>
          <WinButton><svg width="16" height="16" viewBox="0 0 16 16"><path d="M1 8h14" stroke="#303030" strokeWidth="3" /></svg></WinButton>
          <WinButton><svg width="18" height="18" viewBox="0 0 18 18"><path d="M5 1h12v12h-4M1 5h12v12H1z" fill="none" stroke="#303030" strokeWidth="2.4" /></svg></WinButton>
          <WinButton><svg width="16" height="16" viewBox="0 0 16 16"><path d="M1 1l14 14M15 1L1 15" stroke="#303030" strokeWidth="2.4" /></svg></WinButton>
        </RightMenu>
      </TitleBar>
      <Body>
        <LeftCol>
          <Toolbar>
            <PanelToggle><ToggleGlyph /></PanelToggle>
            <Periods>
              {PERIODS.map(([p, ml]) => <Period key={p} $ml={ml} $active={p === '日线'}>{p}</Period>)}
              <svg width="10" height="16" viewBox="0 0 10 16" style={{ marginLeft: -7 }}><path d="M2 2l6 6-6 6" fill="none" stroke="#a8a8a8" strokeWidth="1.3" /></svg>
            </Periods>
            <Tools>
              {TOOLS.map((t) => <Tool key={t}>{t}</Tool>)}
            </Tools>
          </Toolbar>
          <Panel $h={621}>
            <MainChart />
            <PanelHead $top={3}>
              <span>沧州大化(日线)</span>
              <Chevron $ml={9}><ChevronGlyph /></Chevron>
              <HeadText>MA5: 20.27</HeadText><HeadArrow />
              <HeadText $c="#e8e800" $ml={8}>MA10: 19.64</HeadText><HeadArrow up />
              <HeadText $c="#ff00ff" $ml={8}>MA20: 18.68</HeadText><HeadArrow up />
              <HeadText $c="#00f000" $ml={9}>MA60: 16.76</HeadText><HeadArrow up />
            </PanelHead>
          </Panel>
          <Panel $h={379}>
            <IndicatorChart />
            <PanelHead $top={0}>
              <Chevron $mr={7}><ChevronGlyph /></Chevron>
              <span>那牛买卖(5,10,30,60)</span>
              <HeadText $c="#e8e800" $ml={9}>B: -</HeadText>
              <HeadText $c="#00e000" $ml={14}>S: -</HeadText>
              <HeadText $c="#ff00ff" $ml={16}>F: -</HeadText>
              <HeadText $ml={3}>年: 18.67</HeadText><HeadArrow up />
            </PanelHead>
            <PriceTag>18.12</PriceTag>
            <FutureNote>用到未来数据</FutureNote>
          </Panel>
          <Panel $h={216}>
            <VolumeChart />
            <PanelHead $top={2}>
              <Chevron $mr={7}><ChevronGlyph /></Chevron>
              <span>VOLUME: 234869.48</span><HeadArrow />
              <HeadText $ml={10}>MA5: 288109.72</HeadText><HeadArrow />
              <HeadText $c="#e8e800" $ml={10}>MA10: 295651.94</HeadText><HeadArrow up />
            </PanelHead>
            <ImeBar>
              <ImeCell $w={19} $c="#900000" $fw={700} $fs={18} $serif>A</ImeCell>
              <ImeCell $w={70}>极品五笔</ImeCell>
              <ImeCell $w={19}>
                <svg width="12" height="12" viewBox="0 0 12 12"><path d="M8 1a5 5 0 1 1-6 7c3 1 6-2 6-7z" fill="#111" /></svg>
              </ImeCell>
              <ImeCell $w={19} $fs={12}>·,</ImeCell>
              <ImeCell $w={19}>
                <svg width="15" height="11" viewBox="0 0 15 11"><rect x="0.5" y="0.5" width="14" height="10" fill="#eee" stroke="#777" /><path d="M2 3h11M2 5.5h11M2 8h11" stroke="#777" strokeDasharray="1 1" /></svg>
              </ImeCell>
            </ImeBar>
          </Panel>
          <DateAxis>
            <DateMark $x={7}>2022年</DateMark>
            <DateMark $x={236} $line>4</DateMark>
            <DateMark $x={481} $line>5</DateMark>
            <DateCursor>2022/05/24/二</DateCursor>
            <DateMark $x={995} $line>7</DateMark>
          </DateAxis>
          <ButtonRow $h={26} $pl={2}>
            {BTN_ROW_A.map(([t, w, c]) => <RowButton key={t} $w={w} $c={c}>{t}</RowButton>)}
          </ButtonRow>
          <ButtonRow $h={28}>
            {BTN_ROW_B.map(([t, w, c]) => <RowButton key={t} $w={w} $c={c}>{t}</RowButton>)}
          </ButtonRow>
        </LeftCol>
        <QuoteSide />
        <IconStrip>
          {STRIP.map((s, i) => {
            if (s.rule) return <StripRule key={i} />;
            return <StripSlot key={i} $on={s.on}>{s.node || s.text}</StripSlot>;
          })}
        </IconStrip>
      </Body>
      <StatusBar>
        <StatusIcon><StatusDot /></StatusIcon>
        {QUOTES.map(([name, a, b, c, d]) => (
          <QuoteGroup key={name}>
            <QuoteName>{name}</QuoteName>
            <QuoteNum $c="#088008">{a}</QuoteNum>
            <QuoteNum $c="#088008">{b}</QuoteNum>
            <QuoteNum $c="#088008">{c}</QuoteNum>
            <QuoteNum $c="#181818">{d}</QuoteNum>
          </QuoteGroup>
        ))}
      </StatusBar>
      <Banner>
        <BannerTitle>公式指标网</BannerTitle>
        <BannerLogo />
        <BannerUrl>www.9m8.cn</BannerUrl>
      </Banner>
    </Page>
  );
}
